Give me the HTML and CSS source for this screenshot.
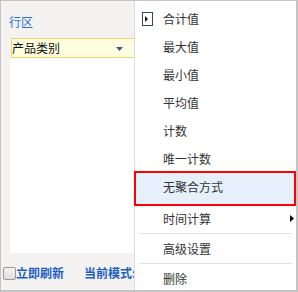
FILE: index.html
```html
<!DOCTYPE html>
<html>
<head>
<meta charset="utf-8">
<link rel="stylesheet" href="styles.css">
</head>
<body>
<div class="frame">
  <div class="panel">
    <div class="title">行区</div>
    <div class="list">
      <div class="select">
        <span>产品类别</span>
        <svg class="caret" width="7" height="4" viewBox="0 0 7 4"><path d="M0 0H7L3.5 4Z" fill="#3b5e80"/></svg>
      </div>
    </div>
    <div class="footer">
      <label class="check"><span class="box"></span><span>立即刷新</span></label>
      <span class="mode">当前模式:</span>
    </div>
  </div>
  <div class="menu">
    <div class="item">
      <svg class="mark" width="11" height="14" viewBox="0 0 11 14"><rect x="0.5" y="0.5" width="10" height="13" fill="#fff" stroke="#34406e"/><path d="M3 4V10L6 7Z" fill="#111"/></svg>
      合计值
    </div>
    <div class="item">最大值</div>
    <div class="item">最小值</div>
    <div class="item">平均值</div>
    <div class="item">计数</div>
    <div class="item">唯一计数</div>
    <div class="item active">无聚合方式</div>
    <div class="item">时间计算
      <svg class="sub" width="4" height="7" viewBox="0 0 4 7"><path d="M0 0L4 3.5L0 7Z" fill="#000"/></svg>
    </div>
    <div class="sep"></div>
    <div class="item">高级设置</div>
    <div class="sep"></div>
    <div class="item">删除</div>
  </div>
</div>
</body>
</html>
```

FILE: styles.css
```css
html, body {
  margin: 0;
  padding: 0;
  background: #fff;
}
.frame {
  position: relative;
  width: 298px;
  height: 292px;
  box-sizing: border-box;
  border-style: solid;
  border-color: #c4c4c4;
  border-width: 1px 2px 2px 1px;
  background: #f3f2f1;
  overflow: hidden;
  font-family: "Noto Sans CJK SC", "Noto Sans", sans-serif;
  font-size: 12px;
  color: #333;
}
.panel {
  display: flex;
  flex-direction: column;
  height: 100%;
}
.title {
  height: 37px;
  box-sizing: border-box;
  padding: 13px 0 0 8px;
  line-height: 16px;
  font-size: 12px;
  color: #2a6fd0;
}
.list {
  margin-left: 9px;
  height: 215px;
  background: #fff;
  padding-left: 1px;
}
.select {
  position: relative;
  height: 20px;
  box-sizing: border-box;
  border: 1px solid #f4d36c;
  background: #fffde0;
  line-height: 18px;
  color: #111;
  width: 200px;
}
.caret {
  position: absolute;
  left: 104px;
  top: 8px;
}
.footer {
  display: flex;
  align-items: center;
  height: 20px;
  margin-top: 10px;
  padding-left: 2px;
  font-weight: bold;
  color: #1f5fc2;
  line-height: 16px;
}
.check {
  display: flex;
  align-items: center;
}
.box {
  width: 11px;
  height: 11px;
  border: 1px solid #9a9a9a;
  border-radius: 2px;
  background: linear-gradient(#f4f4f4, #dcdcdc);
}
.mode {
  margin-left: 20px;
}
.menu {
  position: absolute;
  left: 133px;
  top: 0;
  width: 162px;
  height: 289px;
  background: #fff;
  border-left: 1px solid #dcdcdc;
  padding-top: 4px;
  box-sizing: border-box;
}
.item {
  position: relative;
  height: 28px;
  line-height: 28px;
  padding-left: 28px;
  color: #333;
}
.item.active {
  height: 31px;
  line-height: 27px;
  margin: -2px 0 -1px -1px;
  border: 2px solid #f00;
  padding-left: 27px;
  background: #e5f0fb;
}
.mark {
  position: absolute;
  left: 7px;
  top: 7px;
}
.sub {
  position: absolute;
  right: 2px;
  top: 10px;
}
.sep {
  height: 1px;
  margin: 0 4px 1px 4px;
  background: #e2e2e2;
}
```
